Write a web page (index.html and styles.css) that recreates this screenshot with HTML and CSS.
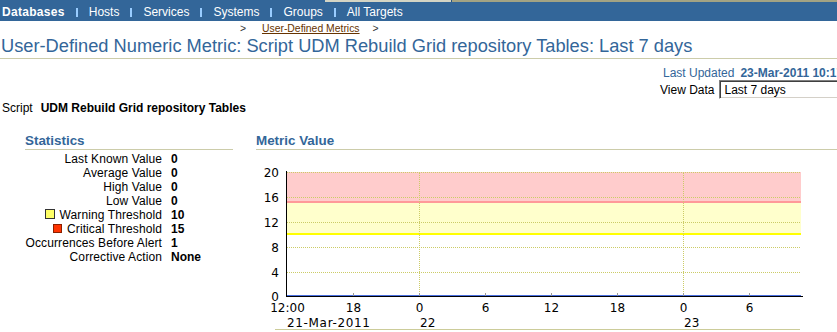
FILE: index.html
```html
<!DOCTYPE html>
<html lang="en">
<head>
    <meta charset="UTF-8">
    <title>User-Defined Numeric Metric</title>
    <link rel="stylesheet" href="styles.css">
</head>
<body>
<div class="page">
    <div class="topstrip">
        <span class="ts-blue"></span><span class="ts-gray"></span><span class="ts-edge"></span><span class="ts-olive"></span>
    </div>
    <div class="tabs">
        <a class="tab active" href="#">Databases</a>
        <span class="sep"></span>
        <a class="tab" href="#">Hosts</a>
        <span class="sep"></span>
        <a class="tab" href="#">Services</a>
        <span class="sep"></span>
        <a class="tab" href="#">Systems</a>
        <span class="sep"></span>
        <a class="tab" href="#">Groups</a>
        <span class="sep"></span>
        <a class="tab" href="#">All Targets</a>
    </div>
    <div class="crumbs">
        <span class="arrow">&gt;</span>
        <a href="#">User-Defined Metrics</a>
        <span class="arrow">&gt;</span>
    </div>
    <h1 class="title">User-Defined Numeric Metric: Script UDM Rebuild Grid repository Tables: Last 7 days</h1>

    <div class="meta">
        <div class="meta-row updated">Last Updated <b>23-Mar-2011 10:17:31 PM</b></div>
        <div class="meta-row">
            <span>View Data</span>
            <div class="select">Last 7 days</div>
        </div>
    </div>

    <div class="script-line">
        <span>Script</span>
        <b>UDM Rebuild Grid repository Tables</b>
    </div>

    <div class="sections">
        <div class="stats">
            <h2 class="section-head">Statistics</h2>
            <div class="stats-grid">
                <div class="label">Last Known Value</div><div class="value">0</div>
                <div class="label">Average Value</div><div class="value">0</div>
                <div class="label">High Value</div><div class="value">0</div>
                <div class="label">Low Value</div><div class="value">0</div>
                <div class="label"><span class="swatch warn"></span>Warning Threshold</div><div class="value">10</div>
                <div class="label"><span class="swatch crit"></span>Critical Threshold</div><div class="value">15</div>
                <div class="label">Occurrences Before Alert</div><div class="value">1</div>
                <div class="label">Corrective Action</div><div class="value">None</div>
            </div>
        </div>
        <div class="metric">
            <h2 class="section-head">Metric Value</h2>
            <svg class="chart" width="600" height="182" viewBox="256 150 600 182">
                <!-- threshold bands -->
                <rect x="287" y="172" width="514" height="29" fill="#ffcccc"/>
                <rect x="287" y="201" width="514" height="2" fill="#ff9999"/>
                <rect x="287" y="203" width="514" height="30" fill="#ffffcc"/>
                <rect x="287" y="233" width="514" height="2" fill="#ffff00"/>

                <g class="grid">
                    <line x1="287" y1="172.5" x2="801" y2="172.5"/>
                    <line x1="287" y1="197.5" x2="801" y2="197.5"/>
                    <line x1="287" y1="222.5" x2="801" y2="222.5"/>
                    <line x1="287" y1="247.5" x2="800" y2="247.5"/>
                    <line x1="287" y1="272.5" x2="800" y2="272.5"/>
                    <line x1="419.5" y1="173" x2="419.5" y2="295"/>
                    <line x1="683.5" y1="173" x2="683.5" y2="295"/>
                </g>

                <line class="series" x1="287" y1="295.5" x2="801" y2="295.5"/>

                <g class="ticks">
                    <line x1="353.5" y1="293" x2="353.5" y2="296"/>
                    <line x1="419.5" y1="293" x2="419.5" y2="296"/>
                    <line x1="485.5" y1="293" x2="485.5" y2="296"/>
                    <line x1="551.5" y1="293" x2="551.5" y2="296"/>
                    <line x1="617.5" y1="293" x2="617.5" y2="296"/>
                    <line x1="683.5" y1="293" x2="683.5" y2="296"/>
                    <line x1="749.5" y1="293" x2="749.5" y2="296"/>
                </g>

                <line class="axis" x1="286.5" y1="171" x2="286.5" y2="297"/>
                <line class="axis" x1="286" y1="296.5" x2="803" y2="296.5"/>

                <g class="ylabels">
                    <text x="279" y="177">20</text>
                    <text x="279" y="202">16</text>
                    <text x="279" y="227">12</text>
                    <text x="279" y="252">8</text>
                    <text x="279" y="277">4</text>
                    <text x="279" y="301">0</text>
                </g>
                <g class="xlabels">
                    <text x="287.5" y="312">12:00</text>
                    <text x="353.5" y="312">18</text>
                    <text x="419.5" y="312">0</text>
                    <text x="485.5" y="312">6</text>
                    <text x="551.5" y="312">12</text>
                    <text x="617.5" y="312">18</text>
                    <text x="683.5" y="312">0</text>
                    <text x="749.5" y="312">6</text>
                </g>
                <g class="dates">
                    <text x="287" y="327" textLength="83" lengthAdjust="spacing">21-Mar-2011</text>
                    <text x="420" y="327">22</text>
                    <text x="684" y="327">23</text>
                </g>

                <line class="foot" x1="275" y1="329.5" x2="800" y2="329.5"/>
            </svg>
        </div>
    </div>
</div>
</body>
</html>
```

FILE: styles.css
```css
html, body {
    margin: 0;
    padding: 0;
    overflow: hidden;
    background: #fff;
}
body {
    font-family: "Liberation Sans", Arial, sans-serif;
    font-size: 12px;
    line-height: 14px;
    color: #000;
}
.page {
    width: 960px;
}

/* top bar */
.topstrip {
    display: flex;
    height: 2px;
}
.ts-blue { width: 325px; background: #336699; }
.ts-gray { width: 126px; background: #d4d4c4; }
.ts-edge { width: 1px; background: #2a5580; }
.ts-olive { flex: 1; background: #a3a383; }

.tabs {
    display: flex;
    align-items: center;
    gap: 11px;
    height: 17px;
    line-height: 17px;
    padding: 2px 0 0 2px;
    background: #336699;
}
.tab {
    color: #fff;
    text-decoration: none;
}
.tab.active {
    font-weight: bold;
    letter-spacing: 0.3px;
}
.sep {
    width: 2px;
    height: 9px;
    background: #99ccff;
}

.crumbs {
    height: 15px;
    line-height: 15px;
    font-size: 10.4px;
    padding-left: 240px;
}
.crumbs .arrow {
    color: #333;
}
.crumbs a {
    color: #663300;
    margin: 0 10px 0 13px;
}

.title {
    margin: 0;
    padding: 0 0 3px 1px;
    font-size: 18.25px;
    line-height: 19px;
    font-weight: normal;
    color: #336699;
    border-bottom: 1px solid #ccccaa;
    white-space: nowrap;
}

/* last updated / view data */
.meta {
    display: flex;
    flex-direction: column;
    align-items: flex-start;
    width: 300px;
    margin: 7px 0 0 auto;
}
.meta-row {
    display: flex;
    align-items: baseline;
    gap: 5px;
    white-space: nowrap;
}
.updated {
    gap: 6px;
    padding-left: 3px;
    color: #336699;
}
.select {
    box-sizing: border-box;
    width: 200px;
    height: 19px;
    padding: 2px 4px 0;
    border: 1px solid;
    border-color: #808080 #fff #fff #808080;
    box-shadow: inset 1px 1px 0 #404040, inset -1px -1px 0 #d4d0c8;
}

.script-line {
    display: flex;
    gap: 8px;
    margin-top: 2px;
    padding-left: 2px;
}

/* statistics + chart */
.sections {
    display: flex;
    gap: 23px;
    margin-top: 18px;
    padding-left: 25px;
}
.stats {
    width: 208px;
}
.metric {
    flex: 1;
}
.section-head {
    margin: 0;
    font-size: 13.4px;
    line-height: 16px;
    font-weight: bold;
    color: #336699;
    border-bottom: 1px solid #ccccaa;
}
.stats-grid {
    display: grid;
    grid-template-columns: 137px auto;
    column-gap: 9px;
    margin-top: 2px;
}
.label {
    text-align: right;
    white-space: nowrap;
    letter-spacing: 0.1px;
}
.value {
    font-weight: bold;
}
.swatch {
    display: inline-block;
    box-sizing: border-box;
    margin-right: 5px;
    border: 1px solid #333;
}
.swatch.warn {
    width: 10px;
    height: 10px;
    background: #ffff66;
}
.swatch.crit {
    width: 9px;
    height: 9px;
    background: #ff3300;
    border-color: #8a2000;
}

.chart {
    display: block;
}
.chart .grid line {
    stroke: #cccc66;
    stroke-dasharray: 1 1;
    shape-rendering: crispEdges;
}
.chart .series {
    stroke: #4a6fe0;
    shape-rendering: crispEdges;
}
.chart .ticks line {
    stroke: #999;
    shape-rendering: crispEdges;
}
.chart .axis {
    stroke: #000;
    shape-rendering: crispEdges;
}
.chart .foot {
    stroke: #cccc99;
    shape-rendering: crispEdges;
}
.chart text {
    font-family: "DejaVu Sans", sans-serif;
    font-size: 12px;
    fill: #000;
}
.chart .ylabels text {
    text-anchor: end;
}
.chart .xlabels text {
    text-anchor: middle;
}
```
